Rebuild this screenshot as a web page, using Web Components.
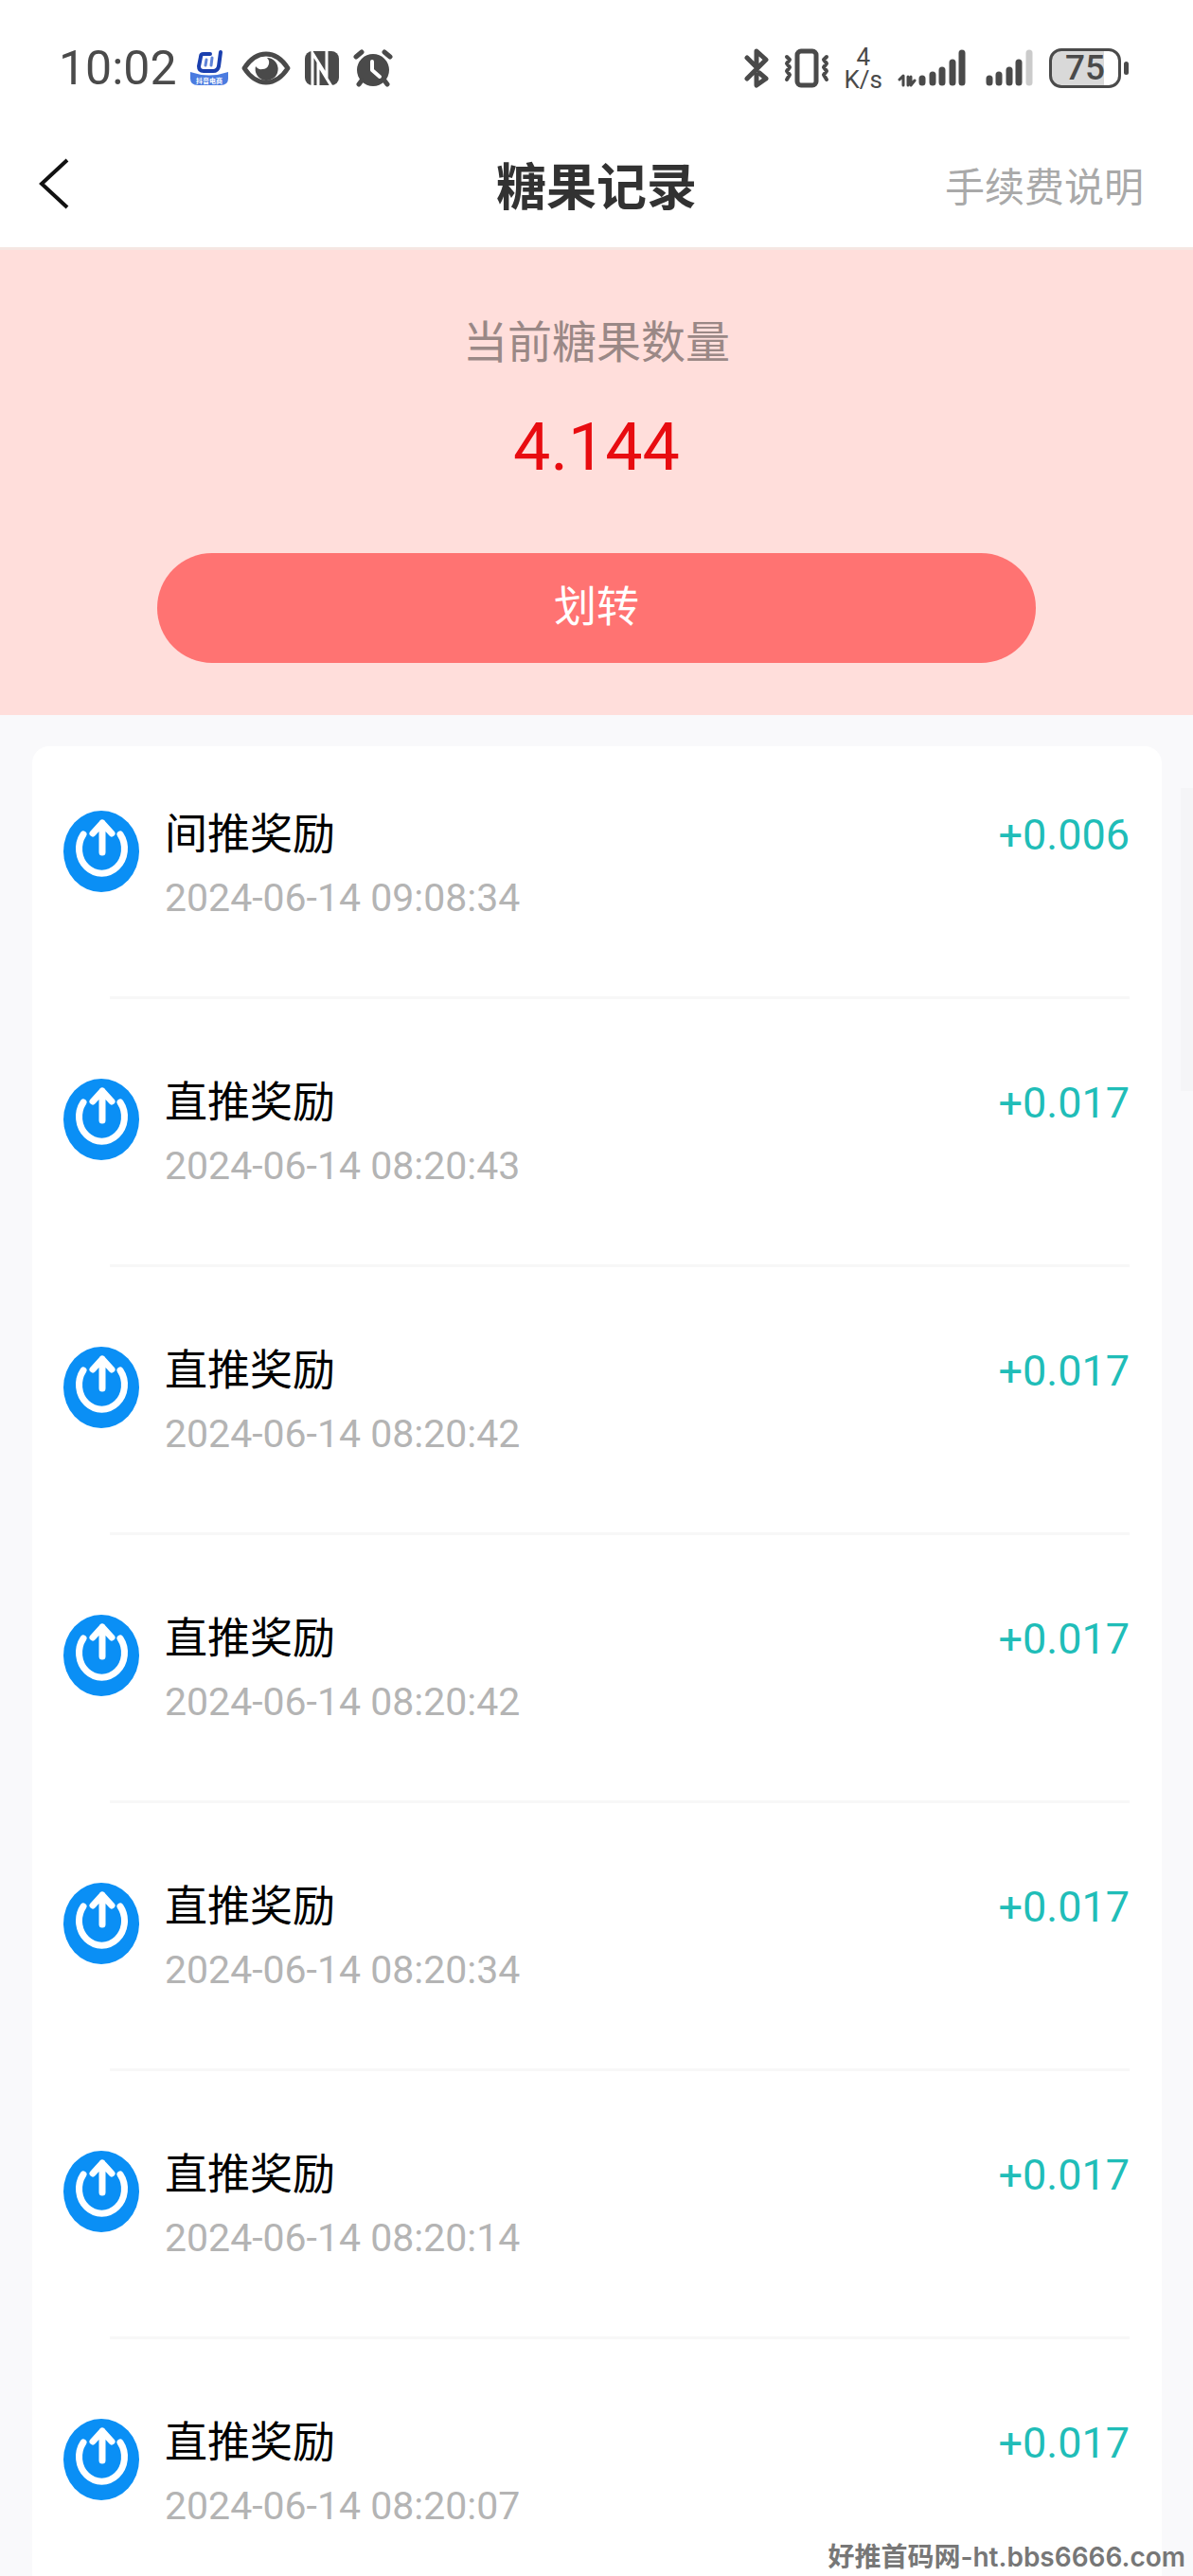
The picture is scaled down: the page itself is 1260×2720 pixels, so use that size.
<!DOCTYPE html>
<html lang="zh-CN">
<head>
<meta charset="utf-8">
<meta name="viewport" content="width=device-width, initial-scale=1">
<title>糖果记录</title>
<style>
    html, body {
        margin: 0;
        background: #f9f9fb;
    }
    body {
        font-family: Roboto, "Noto Sans CJK SC", sans-serif;
        color: #000;
    }
</style>
</head>
<body>
<candy-page>
    <status-bar slot="top" time="10:02" speed="4" battery="75"></status-bar>
    <nav-bar slot="top">
        糖果记录
        <a slot="action" href="#fee">手续费说明</a>
    </nav-bar>
    <balance-panel slot="top" amount="4.144">
        当前糖果数量
        <span slot="button">划转</span>
    </balance-panel>
    <record-item time="2024-06-14 09:08:34" amount="+0.006">间推奖励</record-item>
    <record-item time="2024-06-14 08:20:43" amount="+0.017">直推奖励</record-item>
    <record-item time="2024-06-14 08:20:42" amount="+0.017">直推奖励</record-item>
    <record-item time="2024-06-14 08:20:42" amount="+0.017">直推奖励</record-item>
    <record-item time="2024-06-14 08:20:34" amount="+0.017">直推奖励</record-item>
    <record-item time="2024-06-14 08:20:14" amount="+0.017">直推奖励</record-item>
    <record-item time="2024-06-14 08:20:07" amount="+0.017">直推奖励</record-item>
    <site-mark slot="mark">好推首码网-ht.bbs6666.com</site-mark>
</candy-page>

<script>
class CandyPage extends HTMLElement {
    connectedCallback() {
        this.attachShadow({ mode: 'open' });
        this.shadowRoot.innerHTML = `
            <style>
                :host {
                    display: flex;
                    flex-direction: column;
                    position: relative;
                    min-height: 100vh;
                }
                main {
                    flex: 1;
                    display: flex;
                    flex-direction: column;
                    gap: 16px;
                    margin: 33px 33px 0 34px;
                    padding: 0 34px 0 33px;
                    background: #fff;
                    border-radius: 18px 18px 0 0;
                }
                .thumb {
                    position: absolute;
                    top: 832px;
                    right: 0;
                    width: 13px;
                    height: 320px;
                    background: #f5f5f7;
                }
            </style>
            <slot name="top"></slot>
            <main><slot></slot></main>
            <div class="thumb"></div>
            <slot name="mark"></slot>
        `;
    }
}

class StatusBar extends HTMLElement {
    connectedCallback() {
        this.attachShadow({ mode: 'open' });
        this.shadowRoot.innerHTML = `
            <style>
                :host {
                    display: flex;
                    justify-content: space-between;
                    align-items: center;
                    height: 144px;
                    padding: 0 68px 0 62px;
                    background: #fff;
                    color: #4a4a4a;
                    box-sizing: border-box;
                }
                .side {
                    display: flex;
                    align-items: center;
                    gap: 16px;
                }
                .left {
                    gap: 14px;
                }
                svg {
                    display: block;
                    fill: none;
                    stroke: #4a4a4a;
                    stroke-linecap: round;
                    stroke-linejoin: round;
                }
                .time {
                    font-size: 50px;
                    line-height: 56px;
                }
                .app {
                    font-size: 7px;
                    font-weight: 700;
                }
                .speed {
                    display: flex;
                    flex-direction: column;
                    align-items: center;
                    font-size: 26px;
                    line-height: 24px;
                }
                .battery {
                    display: flex;
                    align-items: center;
                    gap: 3px;
                }
                .cell {
                    display: flex;
                    align-items: center;
                    justify-content: center;
                    width: 76px;
                    height: 42px;
                    box-sizing: border-box;
                    border: 3px solid #4a4a4a;
                    border-radius: 13px;
                    background: linear-gradient(90deg, #d9d9d9 78%, #fff 78%);
                    font-size: 37px;
                    font-weight: 500;
                    line-height: 36px;
                }
                .nub {
                    width: 5px;
                    height: 14px;
                    border-radius: 3px;
                    background: #4a4a4a;
                }
            </style>
            <div class="side left">
                <span class="time">${this.getAttribute('time')}</span>
                <svg width="40" height="40" viewBox="0 0 40 40" aria-hidden="true">
                    <path d="M0 24Q20 31 40 24V31Q40 38 32 38H8Q0 38 0 31Z" fill="#4a7be0" stroke="none"/>
                    <path d="M21 5H14Q11 5 11 8L9 18Q9 23 14 23H24Q29 23 30 18L32 3" stroke="#1a3fae" stroke-width="4"/>
                    <path d="M17 11L16 17M23 9L22 17" stroke="#5f83d8" stroke-width="3"/>
                    <text class="app" x="20" y="36" text-anchor="middle" fill="#fff" stroke="none">抖音电商</text>
                </svg>
                <svg width="52" height="38" viewBox="0 0 52 38" aria-hidden="true">
                    <path d="M3 19C16-1 36-1 49 19C36 39 16 39 3 19Z" stroke-width="5"/>
                    <path d="M15 17A12 12 0 1 0 27 8A7 7 0 0 1 22 20A7 7 0 0 1 15 17Z" fill="#4a4a4a" stroke="none"/>
                </svg>
                <svg width="38" height="38" viewBox="0 0 38 38" aria-hidden="true">
                    <rect x="1" y="1" width="36" height="36" rx="8" fill="#4a4a4a" stroke="none"/>
                    <path d="M9 38V3L24 27V0M15 38V15L29 38" stroke="#fff" stroke-width="3" stroke-linecap="butt" stroke-linejoin="miter"/>
                </svg>
                <svg width="42" height="40" viewBox="0 0 42 40" aria-hidden="true">
                    <circle cx="21" cy="22" r="17" fill="#4a4a4a" stroke="none"/>
                    <path d="M3 8L9 3M39 8L33 3M9 33L6 37M33 33L36 37" stroke-width="5"/>
                    <path d="M20 13V22L28 29" stroke="#fff" stroke-width="4"/>
                </svg>
            </div>
            <div class="side">
                <svg width="26" height="42" viewBox="0 0 26 42" aria-hidden="true">
                    <path d="M3 10L13 20V3L23 12L3 32M16 26L23 32L13 39V28" stroke-width="5"/>
                </svg>
                <svg width="48" height="42" viewBox="0 0 48 42" aria-hidden="true">
                    <rect x="14" y="3" width="20" height="36" rx="4" stroke-width="5"/>
                    <path d="M3 9L6 12L3 16L6 20L3 24L6 28L3 33M45 9L42 12L45 16L42 20L45 24L42 28L45 33" stroke-width="4"/>
                </svg>
                <div class="speed"><span>${this.getAttribute('speed')}</span><span>K/s</span></div>
                <svg width="72" height="42" viewBox="0 0 72 42" aria-hidden="true">
                    <path d="M2 33L6 29V39M11 30V39M14 30V39L18 34" stroke-width="3"/>
                    <path d="M26 32V36M37 28V36M47 23V36M58 15V36M68 5V36" stroke-width="7"/>
                </svg>
                <svg width="56" height="42" viewBox="0 0 56 42" aria-hidden="true">
                    <path d="M9 32V36M19 28V36M30 23V36M40 15V36" stroke-width="7"/>
                    <path d="M51 5V36" stroke="#cbcbcb" stroke-width="7"/>
                </svg>
                <div class="battery"><div class="cell">${this.getAttribute('battery')}</div><div class="nub"></div></div>
            </div>
        `;
    }
}

class NavBar extends HTMLElement {
    connectedCallback() {
        this.attachShadow({ mode: 'open' });
        this.shadowRoot.innerHTML = `
            <style>
                :host {
                    display: grid;
                    grid-template-columns: 1fr auto 1fr;
                    align-items: center;
                    height: 117px;
                    padding: 0 40px 8px;
                    background: #fff;
                    box-sizing: border-box;
                }
                button {
                    justify-self: start;
                    padding: 0;
                    border: 0;
                    background: none;
                }
                svg {
                    display: block;
                }
                h1 {
                    margin: 0;
                    font-size: 53px;
                    line-height: 72px;
                    font-weight: 700;
                    color: #323232;
                }
                ::slotted(a) {
                    justify-self: end;
                    margin-right: 12px;
                    font-size: 42px;
                    line-height: 60px;
                    color: #a9a9a9;
                    text-decoration: none;
                }
            </style>
            <button type="button" aria-label="返回">
                <svg width="34" height="64" viewBox="0 0 34 64" fill="none" stroke="#111" stroke-width="4">
                    <path d="M31 2L4 27L31 52"/>
                </svg>
            </button>
            <h1><slot></slot></h1>
            <slot name="action"></slot>
        `;
    }
}

class BalancePanel extends HTMLElement {
    connectedCallback() {
        this.attachShadow({ mode: 'open' });
        this.shadowRoot.innerHTML = `
            <style>
                :host {
                    display: flex;
                    flex-direction: column;
                    align-items: center;
                    padding: 64px 166px 55px;
                    border-top: 3px solid #f5e6e2;
                    background: #ffdedb;
                }
                .label {
                    font-size: 47px;
                    line-height: 68px;
                    color: #9a8886;
                }
                .amount {
                    margin-top: 34px;
                    font-size: 70px;
                    line-height: 84px;
                    color: #e80c10;
                }
                button {
                    align-self: stretch;
                    height: 116px;
                    margin-top: 70px;
                    padding: 0;
                    border: 0;
                    border-radius: 58px;
                    background: #ff7372;
                    color: #fff;
                    font-family: inherit;
                    font-size: 45px;
                    line-height: 66px;
                }
            </style>
            <div class="label"><slot></slot></div>
            <div class="amount">${this.getAttribute('amount')}</div>
            <button type="button"><slot name="button"></slot></button>
        `;
    }
}

class RecordItem extends HTMLElement {
    connectedCallback() {
        this.attachShadow({ mode: 'open' });
        this.shadowRoot.innerHTML = `
            <style>
                :host {
                    display: block;
                }
                .row {
                    display: flex;
                    align-items: flex-start;
                    padding: 60px 0 72px;
                }
                svg {
                    flex: none;
                    margin: 8px 26px 0 0;
                }
                .info {
                    flex: 1;
                    display: flex;
                    flex-direction: column;
                }
                .title, .amount {
                    font-size: 45px;
                    line-height: 68px;
                }
                time {
                    font-size: 41px;
                    line-height: 64px;
                    color: #b4b4b4;
                }
                .amount {
                    color: #20bdb8;
                }
                .line {
                    height: 3px;
                    margin-left: 49px;
                    background: #f7f7f7;
                }
                :host(:last-of-type) .row {
                    padding-bottom: 40px;
                }
                :host(:last-of-type) .line {
                    display: none;
                }
            </style>
            <div class="row">
                <svg width="81" height="86" viewBox="0 0 81 86" fill="none" stroke="#fff" stroke-linecap="round" stroke-linejoin="round" aria-hidden="true">
                    <ellipse cx="40" cy="43" rx="40" ry="43" fill="#0a8ff5" stroke="none"/>
                    <path d="M21 25A24 26 0 1 0 60 25" stroke-width="7"/>
                    <path d="M41 44V13M31 24L41 13L51 24" stroke-width="7"/>
                </svg>
                <div class="info">
                    <span class="title"><slot></slot></span>
                    <time>${this.getAttribute('time')}</time>
                </div>
                <span class="amount">${this.getAttribute('amount')}</span>
            </div>
            <div class="line"></div>
        `;
    }
}

class SiteMark extends HTMLElement {
    connectedCallback() {
        this.attachShadow({ mode: 'open' });
        this.shadowRoot.innerHTML = `
            <style>
                :host {
                    position: absolute;
                    right: 8px;
                    bottom: 0;
                    font-family: Inter, "Noto Sans CJK SC", sans-serif;
                    font-size: 28px;
                    line-height: 40px;
                    font-weight: 600;
                    color: #777;
                }
            </style>
            <slot></slot>
        `;
    }
}

customElements.define('candy-page', CandyPage);
customElements.define('status-bar', StatusBar);
customElements.define('nav-bar', NavBar);
customElements.define('balance-panel', BalancePanel);
customElements.define('record-item', RecordItem);
customElements.define('site-mark', SiteMark);
</script>
</body>
</html>
